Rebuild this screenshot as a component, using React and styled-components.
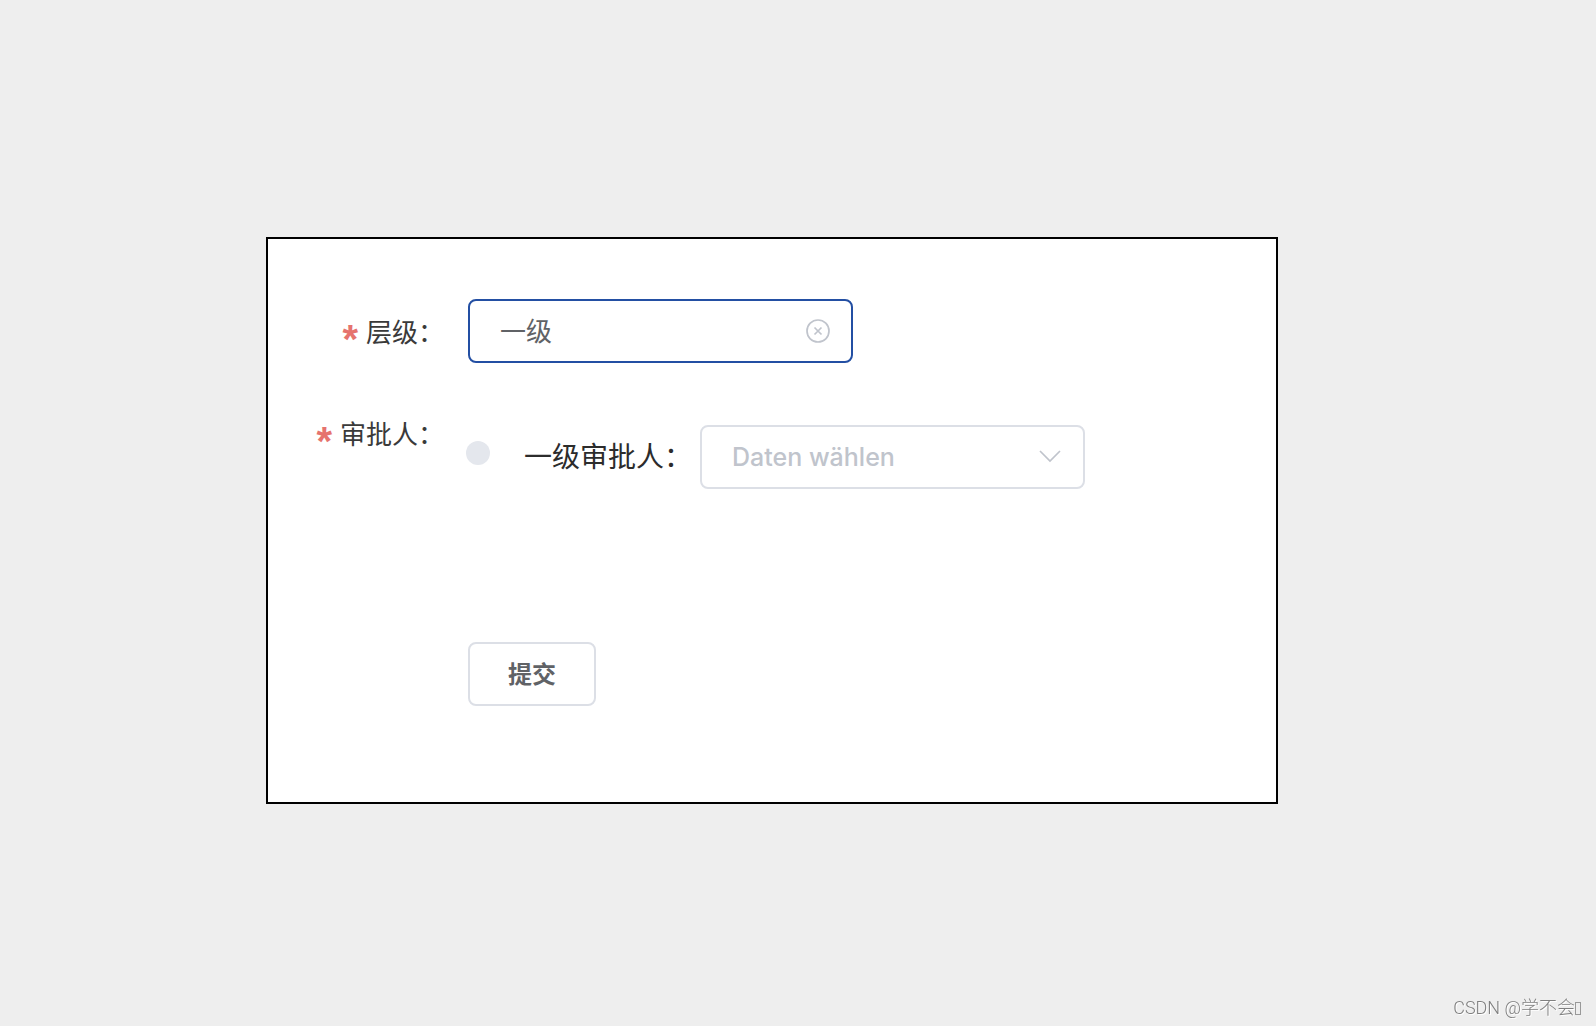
import { useState } from "react";
import styled, { createGlobalStyle } from "styled-components";

const GlobalStyle = createGlobalStyle`
  * {
    box-sizing: border-box;
  }

  body {
    margin: 0;
    background: #eeeeee;
    font-family: Inter, "Noto Sans CJK SC", sans-serif;
  }
`;

const App = () => {
  const [level, setLevel] = useState("1");
  const [approver, setApprover] = useState("");

  return (
    <Page>
      <GlobalStyle />
      <Panel onSubmit={(e) => e.preventDefault()}>
        <FormItem>
          <Label htmlFor="level">
            <Star>*</Star>层级：
          </Label>
          <SelectBox>
            <Select
              id="level"
              $active
              $empty={!level}
              value={level}
              onChange={(e) => setLevel(e.target.value)}
            >
              <option value="" hidden>
                Daten wählen
              </option>
              <option value="1">一级</option>
              <option value="2">二级</option>
            </Select>
            <ClearButton
              type="button"
              aria-label="clear"
              onClick={() => setLevel("")}
            >
              <svg viewBox="0 0 24 24" width="24" height="24">
                <circle cx="12" cy="12" r="11" />
                <path d="M8.5 8.5l7 7M15.5 8.5l-7 7" />
              </svg>
            </ClearButton>
          </SelectBox>
        </FormItem>

        <FormItem>
          <Label htmlFor="approver">
            <Star>*</Star>审批人：
          </Label>
          <Timeline>
            <TimelineItem>
              <Dot />
              <ItemName htmlFor="approver">一级审批人：</ItemName>
              <SelectBox>
                <Select
                  id="approver"
                  $empty={!approver}
                  value={approver}
                  onChange={(e) => setApprover(e.target.value)}
                >
                  <option value="" hidden>
                    Daten wählen
                  </option>
                </Select>
                <Arrow viewBox="0 0 24 24" width="24" height="24">
                  <path d="M2 6l10 10L22 6" />
                </Arrow>
              </SelectBox>
            </TimelineItem>
          </Timeline>
        </FormItem>

        <FormItem>
          <span />
          <SubmitButton type="submit">提交</SubmitButton>
        </FormItem>
      </Panel>
      <Watermark>
        CSDN @学不会
        <MissingGlyph />
      </Watermark>
    </Page>
  );
};

const Page = styled.main`
  min-height: 100vh;
  padding: 237px 318px 222px 266px;
`;

const Panel = styled.form`
  display: flex;
  flex-direction: column;
  gap: 38px;
  padding: 60px 0 96px;
  border: 2px solid #000;
  background: #fff;
`;

const FormItem = styled.div`
  display: grid;
  grid-template-columns: 200px 1fr;
  align-items: start;
`;

const Label = styled.label`
  padding: 10px 24px 0 0;
  font-size: 26px;
  line-height: 48px;
  text-align: right;
  white-space: nowrap;
  color: #3a3a3a;
`;

const Star = styled.span`
  margin-right: 8px;
  font-family: "Liberation Sans", sans-serif;
  font-size: 40px;
  font-weight: 700;
  line-height: 0;
  vertical-align: -11px;
  color: #e6736e;
`;

const SelectBox = styled.div`
  position: relative;
  width: 385px;
  height: 64px;
`;

const Select = styled.select`
  width: 100%;
  height: 100%;
  padding: 0 60px 0 30px;
  appearance: none;
  border: 2px solid ${({ $active }) => ($active ? "#234fa3" : "#dcdfe6")};
  border-radius: 8px;
  outline: none;
  background: #fff;
  font-family: inherit;
  font-size: ${({ $empty }) => ($empty ? "25px" : "26px")};
  font-weight: ${({ $empty }) => ($empty ? 500 : 400)};
  color: ${({ $empty }) => ($empty ? "#c0c4cc" : "#606266")};
`;

const ClearButton = styled.button`
  position: absolute;
  top: 20px;
  right: 23px;
  display: flex;
  padding: 0;
  border: 0;
  background: none;
  cursor: pointer;

  svg {
    fill: none;
    stroke: #c0c4cc;
    stroke-width: 1.7;
  }
`;

const Arrow = styled.svg`
  position: absolute;
  top: 20px;
  right: 23px;
  fill: none;
  stroke: #c0c4cc;
  stroke-width: 1.7;
  pointer-events: none;
`;

const Timeline = styled.ul`
  margin: 0 0 0 -2px;
  padding: 24px 0 115px;
  list-style: none;
`;

const TimelineItem = styled.li`
  display: flex;
  align-items: flex-start;
`;

const Dot = styled.span`
  width: 24px;
  height: 24px;
  margin: 16px 34px 0 0;
  border-radius: 50%;
  background: #e4e7ed;
`;

const ItemName = styled.label`
  margin-right: 8px;
  padding-top: 8px;
  font-size: 28px;
  line-height: 48px;
  white-space: nowrap;
  color: #2c2c2c;
`;

const SubmitButton = styled.button`
  justify-self: start;
  height: 64px;
  padding: 0 38px 4px;
  border: 2px solid #dcdfe6;
  border-radius: 8px;
  background: #fff;
  font-family: inherit;
  font-size: 24px;
  font-weight: 600;
  color: #606266;
  cursor: pointer;
`;

const Watermark = styled.div`
  position: fixed;
  right: 15px;
  bottom: 6px;
  display: flex;
  align-items: center;
  font-family: Roboto, "Noto Sans CJK SC", sans-serif;
  font-size: 18px;
  font-weight: 300;
  line-height: 24px;
  color: #808080;
  text-shadow: 1px 1px 0 #fff;
`;

const MissingGlyph = styled.span`
  width: 6px;
  height: 13px;
  border: 1px solid #999;
`;

export default App;
